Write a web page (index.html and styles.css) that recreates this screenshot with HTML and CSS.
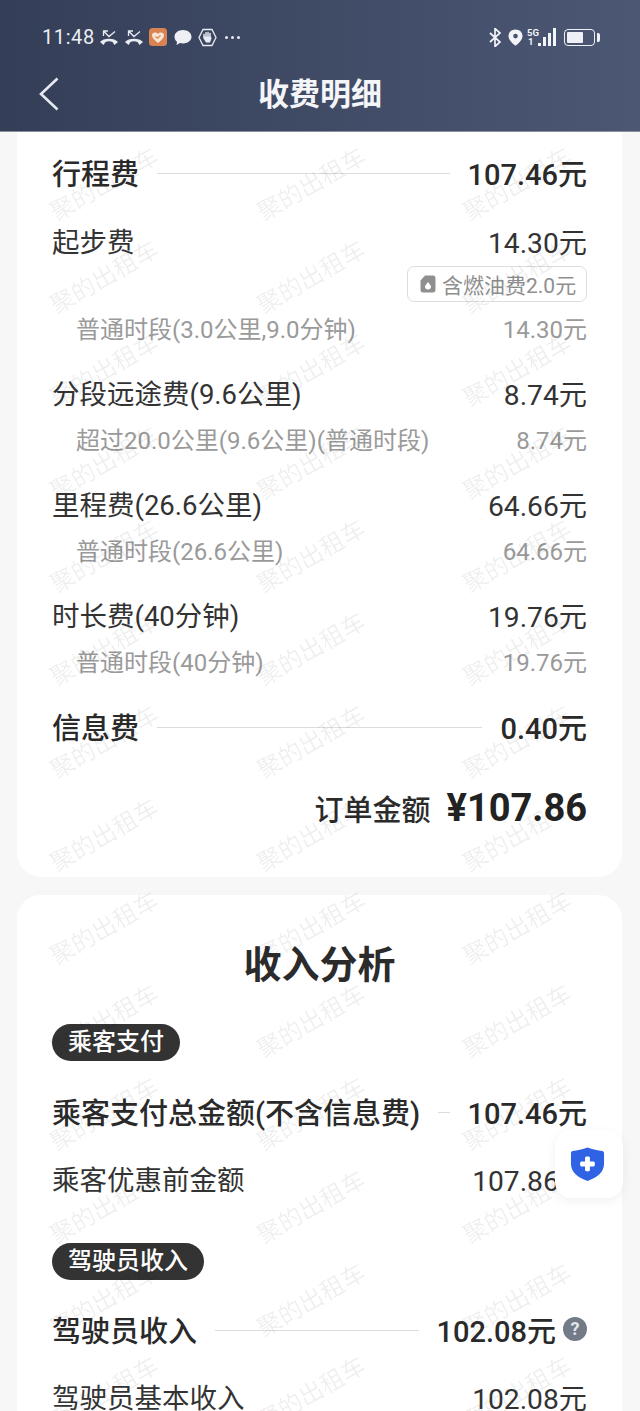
FILE: index.html
```html
<!DOCTYPE html>
<html lang="zh-CN">
<head>
    <meta charset="UTF-8">
    <meta name="viewport" content="width=device-width, initial-scale=1.0">
    <title>收费明细</title>
    <link rel="stylesheet" href="styles.css">
</head>
<body>
    <header class="top">
        <div class="status">
            <div class="status-left">
                <span class="time">11:48</span>
                <svg class="ic-call" viewBox="0 0 18 15"><path d="M3.500 6V1H8M3.500 1L9 6.500L15 1.500" fill="none" stroke="#e8ebf2" stroke-width="1.300"/><path d="M0 12C3 7.500 15 7.500 18 12L14.500 15L12.500 12C10.500 11 7.500 11 5.500 12L3.500 15Z" fill="#e8ebf2"/></svg>
                <svg class="ic-call" viewBox="0 0 18 15"><path d="M3.500 6V1H8M3.500 1L9 6.500L15 1.500" fill="none" stroke="#e8ebf2" stroke-width="1.300"/><path d="M0 12C3 7.500 15 7.500 18 12L14.500 15L12.500 12C10.500 11 7.500 11 5.500 12L3.500 15Z" fill="#e8ebf2"/></svg>
                <svg class="ic-app" viewBox="0 0 18 18"><rect width="18" height="18" rx="3.500" fill="#d98352"/><path d="M9 15C5 12 3 9.500 3 7C3 4.500 6.800 3.500 9 6C11.200 3.500 15 4.500 15 7C15 9.500 13 12 9 15Z" fill="#f8e6d4"/><path d="M6.500 8.500L8.500 10.300L11.500 7.500" fill="none" stroke="#d98352" stroke-width="1.200"/></svg>
                <svg class="ic-chat" viewBox="0 0 18 16"><path d="M9 .5C13.800 .5 17.500 3.400 17.500 7.300C17.500 11.200 13.800 14 9 14C8 14 7 13.900 6 13.600L2.500 15.500L3 12.300C1.300 11 .5 9.300 .5 7.300C.5 3.400 4.200 .5 9 .5Z" fill="#eef0f5"/></svg>
                <svg class="ic-hand" viewBox="0 0 19 19"><path d="M5 1.500H14L18 9.500L14 17.500H5L1 9.500Z" fill="none" stroke="#e8ebf2" stroke-width="1.300"/><path d="M6 9V6.500M8 8.500V4.800M10 8.500V4.500M12 9V5.500" stroke="#e8ebf2" stroke-width="1.500" stroke-linecap="round"/><path d="M5.500 8.500H13L13.500 10.500L12 14.500H8L5.500 10.500Z" fill="#e8ebf2"/></svg>
                <span class="more"><i></i><i></i><i></i></span>
            </div>
            <div class="status-right">
                <svg class="ic-bt" viewBox="0 0 14 19"><path d="M2 5l10 9-5 4.500V.5l5 4.500-10 9" fill="none" stroke="#f2f4f8" stroke-width="1.700"/></svg>
                <svg class="ic-loc" viewBox="0 0 15 17"><path fill-rule="evenodd" d="M7.500 .5C11.500 .5 14.500 3.300 14.500 7C14.500 10.500 11 14.200 7.500 16.800C4 14.200 .5 10.500 .5 7C.5 3.300 3.500 .5 7.500 .5ZM7.500 4.800A2.300 2.300 0 1 0 7.500 9.400A2.300 2.300 0 1 0 7.500 4.800Z" fill="#f2f4f8"/></svg>
                <span class="net"><b>5G</b><b>1</b></span>
                <span class="bars"><i class="b1"></i><i class="b2"></i><i class="b3"></i><i class="b4"></i></span>
                <span class="battery"><span class="battery-body"><i></i></span><span class="battery-tip"></span></span>
            </div>
        </div>
        <div class="nav">
            <svg class="back" viewBox="0 0 20 34"><path d="M18.500 1.500L2 17L18.500 32.500" fill="none" stroke="#e6e9f0" stroke-width="2.600"/></svg>
            <h1>收费明细</h1>
            <span></span>
        </div>
    </header>

    <div class="marks">
        <span>聚的出租车</span><span>聚的出租车</span><span>聚的出租车</span>
        <span>聚的出租车</span><span>聚的出租车</span><span>聚的出租车</span>
        <span>聚的出租车</span><span>聚的出租车</span><span>聚的出租车</span>
        <span>聚的出租车</span><span>聚的出租车</span><span>聚的出租车</span>
        <span>聚的出租车</span><span>聚的出租车</span><span>聚的出租车</span>
        <span>聚的出租车</span><span>聚的出租车</span><span>聚的出租车</span>
        <span>聚的出租车</span><span>聚的出租车</span><span>聚的出租车</span>
        <span>聚的出租车</span><span>聚的出租车</span><span>聚的出租车</span>
        <span>聚的出租车</span><span>聚的出租车</span><span>聚的出租车</span>
        <span>聚的出租车</span><span>聚的出租车</span><span>聚的出租车</span>
        <span>聚的出租车</span><span>聚的出租车</span><span>聚的出租车</span>
        <span>聚的出租车</span><span>聚的出租车</span><span>聚的出租车</span>
        <span>聚的出租车</span><span>聚的出租车</span><span>聚的出租车</span>
        <span>聚的出租车</span><span>聚的出租车</span><span>聚的出租车</span>
    </div>

    <main class="content">
        <section class="card card-fees">
            <div class="row row-main"><span>行程费</span><i class="rule"></i><span>107.46元</span></div>
            <div class="row row-item gap"><span>起步费</span><span class="val">14.30元</span></div>
            <div class="tag-line">
                <span class="tag">
                    <svg class="ic-oil" viewBox="0 0 16 18"><path fill-rule="evenodd" d="M5 .5H13C14.500 .5 15.500 1.500 15.500 3V15C15.500 16.500 14.500 17.500 13 17.500H3C1.500 17.500 .5 16.500 .5 15V5.500ZM8 7C6 9.500 5 10.800 5 12C5 13.500 6.300 14.500 8 14.500C9.700 14.500 11 13.500 11 12C11 10.800 10 9.500 8 7Z" fill="#8f8f8f"/></svg>
                    含燃油费2.0元
                </span>
            </div>
            <div class="row row-sub after-tag"><span>普通时段(3.0公里,9.0分钟)</span><span>14.30元</span></div>
            <div class="row row-item gap"><span>分段远途费(9.6公里)</span><span class="val">8.74元</span></div>
            <div class="row row-sub"><span>超过20.0公里(9.6公里)(普通时段)</span><span>8.74元</span></div>
            <div class="row row-item gap"><span>里程费(26.6公里)</span><span class="val">64.66元</span></div>
            <div class="row row-sub"><span>普通时段(26.6公里)</span><span>64.66元</span></div>
            <div class="row row-item gap"><span>时长费(40分钟)</span><span class="val">19.76元</span></div>
            <div class="row row-sub"><span>普通时段(40分钟)</span><span>19.76元</span></div>
            <div class="row row-main gap-main"><span>信息费</span><i class="rule"></i><span>0.40元</span></div>
            <div class="total"><span class="total-label">订单金额</span><span class="total-num">¥107.86</span></div>
        </section>

        <section class="card card-income">
            <h2>收入分析</h2>
            <span class="chip">乘客支付</span>
            <div class="row row-main pay"><span>乘客支付总金额(不含信息费)</span><i class="rule"></i><span>107.46元</span></div>
            <div class="row row-item before"><span>乘客优惠前金额</span><span class="val">107.86元</span></div>
            <span class="chip chip-two">驾驶员收入</span>
            <div class="row row-main pay-two">
                <span>驾驶员收入</span><i class="rule"></i><span>102.08元</span>
                <span class="help">?</span>
            </div>
            <div class="row row-item before-two"><span>驾驶员基本收入</span><span class="val">102.08元</span></div>
        </section>
    </main>

    <div class="float-btn">
        <svg viewBox="0 0 36 36"><path d="M18 1C23 3 29 4 33 4.500C34.500 4.700 35 5.500 35 7V18C35 26 28 32 18 35.500C8 32 1 26 1 18V7C1 5.500 1.500 4.700 3 4.500C7 4 13 3 18 1Z" fill="#2f63e3"/><path d="M15.500 11.500C15.500 10 20.500 10 20.500 11.500V15.500H24.500C26 15.500 26 20.500 24.500 20.500H20.500V24.500C20.500 26 15.500 26 15.500 24.500V20.500H11.500C10 20.500 10 15.500 11.500 15.500H15.500Z" fill="#fff"/></svg>
    </div>
</body>
</html>
```

FILE: styles.css
```css
* {
    box-sizing: border-box;
}

html, body {
    margin: 0;
    height: 1411px;
    overflow: hidden;
}

body {
    position: relative;
    background: #f7f7f7;
    font-family: Roboto, "Noto Sans CJK SC", sans-serif;
    color: #2b2b2b;
}

/* top bar */
.top {
    position: relative;
    z-index: 3;
    height: 132px;
    background: linear-gradient(90deg, #343e57, #4c5774);
    border-bottom: 1px solid #8a8f9c;
    color: #fff;
}

.status {
    height: 66px;
    padding: 26px 40px 0 42px;
    display: flex;
    justify-content: space-between;
    align-items: flex-start;
}

.status-left, .status-right {
    display: flex;
    align-items: center;
    height: 22px;
}

.time {
    font-size: 20px;
    color: #eceef3;
    letter-spacing: 0.6px;
    margin-right: 5px;
}

.ic-call { width: 18px; height: 15px; margin-right: 7px; }
.ic-app { width: 18px; height: 18px; margin: 0 7px 0 -1px; }
.ic-chat { width: 18px; height: 17px; margin-right: 6px; }
.ic-hand { width: 19px; height: 19px; margin-right: 8px; }

.more {
    display: flex;
    gap: 3px;
}

.more i {
    width: 3px;
    height: 3px;
    border-radius: 50%;
    background: #e8ebf2;
}

.ic-bt { width: 14px; height: 19px; margin-right: 6px; }
.ic-loc { width: 15px; height: 17px; margin-right: 4px; }

.net {
    display: flex;
    flex-direction: column;
    font-size: 9.500px;
    line-height: 9px;
    color: #f2f4f8;
    width: 11px;
}

.net b:last-child { margin-left: 1px; }

.bars {
    display: flex;
    align-items: flex-end;
    gap: 2px;
    height: 18px;
    margin-right: 8px;
}

.bars i {
    width: 3px;
    background: #f2f4f8;
}

.b1 { height: 3px; }
.b2 { height: 9px; }
.b3 { height: 13px; }
.b4 { height: 18px; }

.battery {
    display: flex;
    align-items: center;
    gap: 2px;
}

.battery-body {
    width: 31px;
    height: 17px;
    border: 1.5px solid #eef0f5;
    border-radius: 4px;
    padding: 2px;
    display: flex;
}

.battery-body i {
    width: 16px;
    background: #eef0f5;
    border-radius: 1px;
}

.battery-tip {
    width: 3px;
    height: 9px;
    background: #eef0f5;
    border-radius: 0 2px 2px 0;
}

.nav {
    height: 56px;
    padding: 0 39px;
    display: grid;
    grid-template-columns: 1fr auto 1fr;
    align-items: center;
}

.back {
    width: 20px;
    height: 34px;
}

.nav h1 {
    margin: 0 0 5px;
    font-size: 31px;
    font-weight: 700;
    color: #f4f5f8;
}

/* watermark layer */
.marks {
    position: absolute;
    z-index: 2;
    top: 136px;
    left: 0;
    width: 620px;
    display: grid;
    grid-template-columns: repeat(3, 206.5px);
    grid-auto-rows: 93px;
    pointer-events: none;
}

.marks span {
    display: flex;
    align-items: center;
    justify-content: center;
    font-size: 24px;
    color: rgba(0, 0, 0, 0.07);
    transform: rotate(-30deg);
    white-space: nowrap;
}

/* cards */
.content {
    padding: 0 18px 0 17px;
}

.card {
    background: #fff;
    padding: 0 35px;
}

.card-fees {
    height: 745px;
    padding-top: 20px;
    border-radius: 0 0 24px 24px;
}

.card-income {
    margin-top: 18px;
    height: 560px;
    border-radius: 24px 24px 0 0;
}

.row {
    display: flex;
    align-items: center;
    justify-content: space-between;
}

.row span {
    white-space: nowrap;
}

.row-main {
    height: 40px;
    font-size: 29px;
    font-weight: 500;
    color: #2a2a2a;
}

.rule {
    flex: 1;
    height: 1px;
    margin: 3px 18px 0;
    background: #dcdcdc;
}

.row-item {
    height: 40px;
    font-size: 27.500px;
    color: #333;
}

.row-item .val {
    font-size: 28.200px;
}

.row-sub {
    height: 34px;
    margin-top: 9px;
    font-size: 24px;
    color: #9a9a9a;
    padding-left: 24px;
}

.gap { margin-top: 28px; }
.gap-main { margin-top: 29px; }
.after-tag { margin-top: 8px; }

.tag-line {
    display: flex;
    justify-content: flex-end;
    margin-top: 6px;
}

.tag {
    display: flex;
    align-items: center;
    gap: 6px;
    height: 36px;
    width: 180px;
    padding-left: 12px;
    border: 1px solid #dedede;
    border-radius: 7px;
    font-size: 21px;
    color: #8f8f8f;
    white-space: nowrap;
}

.ic-oil {
    width: 16px;
    height: 18px;
}

.total {
    height: 50px;
    margin-top: 37px;
    display: flex;
    align-items: center;
    justify-content: flex-end;
    gap: 16px;
}

.total-label {
    font-size: 29px;
    font-weight: 500;
}

.total-num {
    font-size: 38px;
    font-weight: 700;
    color: #222;
}

.card-income h2 {
    margin: 0;
    padding-top: 44px;
    height: 129px;
    font-size: 38px;
    line-height: 52px;
    font-weight: 700;
    text-align: center;
    color: #2b2b2b;
}

.chip {
    display: block;
    width: 128px;
    height: 37px;
    line-height: 36px;
    border-radius: 19px;
    background: #333;
    color: #fff;
    font-size: 24px;
    font-weight: 500;
    text-align: center;
}

.chip-two {
    width: 152px;
    margin-top: 45px;
}

.pay { margin-top: 30px; }
.before { margin-top: 27px; }
.pay-two { margin-top: 29px; }
.before-two { margin-top: 27px; }

.help {
    width: 24px;
    height: 24px;
    margin-left: 7px;
    border-radius: 50%;
    background: #737b89;
    color: #e4e6ea;
    font-size: 18px;
    font-weight: 700;
    line-height: 24px;
    text-align: center;
}

/* floating shield */
.float-btn {
    position: absolute;
    z-index: 4;
    top: 1130px;
    left: 555px;
    width: 68px;
    height: 68px;
    padding: 0 3px 1px 0;
    border-radius: 16px;
    background: #fff;
    box-shadow: 0 3px 12px rgba(0, 0, 0, 0.06);
    display: flex;
    align-items: center;
    justify-content: center;
}

.float-btn svg {
    width: 35px;
    height: 36px;
}
```
